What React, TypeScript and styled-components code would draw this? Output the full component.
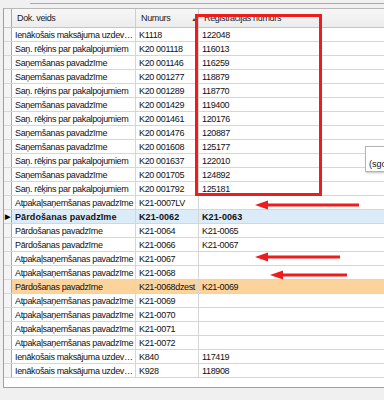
import React from "react";
import styled, { createGlobalStyle, css } from "styled-components";

type Kind = "plain" | "selected" | "marked";

interface DocRow {
    dok: string;
    num: string;
    reg?: string;
    kind?: Kind;
}

const INC = "Ienākošais maksājuma uzdev…";
const SRP = "Saņ. rēķins par pakalpojumiem";
const SP = "Saņemšanas pavadzīme";
const AP = "Atpakaļsaņemšanas pavadzīme";
const PP = "Pārdošanas pavadzīme";

const rows: DocRow[] = [
    { dok: INC, num: "K1118", reg: "122048" },
    { dok: SRP, num: "K20 001118", reg: "116013" },
    { dok: SP, num: "K20 001146", reg: "116259" },
    { dok: SP, num: "K20 001277", reg: "118879" },
    { dok: SRP, num: "K20 001289", reg: "118770" },
    { dok: SP, num: "K20 001429", reg: "119400" },
    { dok: SRP, num: "K20 001461", reg: "120176" },
    { dok: SP, num: "K20 001476", reg: "120887" },
    { dok: SP, num: "K20 001608", reg: "125177" },
    { dok: SRP, num: "K20 001637", reg: "122010" },
    { dok: SP, num: "K20 001705", reg: "124892" },
    { dok: SRP, num: "K20 001792", reg: "125181" },
    { dok: AP, num: "K21-0007LV" },
    { dok: PP, num: "K21-0062", reg: "K21-0063", kind: "selected" },
    { dok: PP, num: "K21-0064", reg: "K21-0065" },
    { dok: PP, num: "K21-0066", reg: "K21-0067" },
    { dok: AP, num: "K21-0067" },
    { dok: AP, num: "K21-0068" },
    { dok: PP, num: "K21-0068dzest", reg: "K21-0069", kind: "marked" },
    { dok: AP, num: "K21-0069" },
    { dok: AP, num: "K21-0070" },
    { dok: AP, num: "K21-0071" },
    { dok: AP, num: "K21-0072" },
    { dok: INC, num: "K840", reg: "117419" },
    { dok: INC, num: "K928", reg: "118908" },
];

const GlobalStyle = createGlobalStyle`
    html, body {
        margin: 0;
        padding: 0;
        background: #f0f0f0;
    }
`;

export default function App() {
    return (
        <>
            <GlobalStyle />
            <Screen>
                <TopStrip>
                    <TabEdge />
                </TopStrip>
                <GridFrame>
                    <HeaderRow>
                        <IndicatorCell />
                        <HeaderCell>Dok. veids</HeaderCell>
                        <HeaderCell>
                            Numurs
                            <SortGlyph>▲</SortGlyph>
                        </HeaderCell>
                        <HeaderCell $last>Registracijas numurs</HeaderCell>
                    </HeaderRow>
                    {rows.map((r, i) => (
                        <DataRow key={i} $kind={r.kind ?? "plain"}>
                            <IndicatorCell>
                                {r.kind === "selected" && <RowPointer>▶</RowPointer>}
                            </IndicatorCell>
                            <Cell>{r.dok}</Cell>
                            <Cell>{r.num}</Cell>
                            <Cell $last>{r.reg ?? ""}</Cell>
                        </DataRow>
                    ))}
                    <Filler />
                </GridFrame>
                <RedFrame />
                <Arrows width="384" height="400" viewBox="0 0 384 400">
                    <Arrow x1={359} x2={255} y={205} />
                    <Arrow x1={340} x2={255} y={257} />
                    <Arrow x1={347} x2={270} y={275} />
                </Arrows>
                <Hint>(sgo</Hint>
            </Screen>
        </>
    );
}

function Arrow({ x1, x2, y }: { x1: number; x2: number; y: number }) {
    return (
        <g fill="#ee1c1c" stroke="#ee1c1c">
            <line x1={x1} y1={y} x2={x2 + 10} y2={y} strokeWidth={3} />
            <polygon points={`${x2},${y} ${x2 + 13},${y - 4.5} ${x2 + 13},${y + 4.5}`} stroke="none" />
        </g>
    );
}

const Screen = styled.div`
    position: relative;
    width: 384px;
    height: 400px;
    overflow: hidden;
    background: #f0f0f0;
    font-family: "Liberation Sans", Arial, sans-serif;
    font-size: 9px;
    letter-spacing: -0.35px;
    color: #111;
`;

const TopStrip = styled.div`
    height: 8px;
    padding-top: 3px;
    box-sizing: border-box;
    padding-left: 30px;
`;

const TabEdge = styled.div`
    height: 1px;
    background: #a8a8a8;
`;

const GridFrame = styled.div`
    margin-left: 3px;
    height: 380px;
    background: #ffffff;
    border-left: 1px solid #a0a0a0;
    border-bottom: 1px solid #a0a0a0;
    box-sizing: border-box;
    display: flex;
    flex-direction: column;
`;

const columns = css`
    display: grid;
    grid-template-columns: 8px 124px 63px 1fr;
`;

const HeaderRow = styled.div`
    ${columns};
    height: 20px;
    background: linear-gradient(#f7f7f7, #ececec);
    border-top: 1px solid #b8b8b8;
    border-bottom: 1px solid #c4c4c4;
    box-sizing: border-box;
`;

const HeaderCell = styled.div<{ $last?: boolean }>`
    position: relative;
    display: flex;
    align-items: center;
    padding-left: 5px;
    color: #222;
    border-right: ${(p) => (p.$last ? "none" : "1px solid #cfcfcf")};
    white-space: nowrap;
    overflow: hidden;
`;

const SortGlyph = styled.span`
    position: absolute;
    right: 2px;
    top: 7px;
    font-size: 5px;
    color: #333;
`;

const DataRow = styled.div<{ $kind: Kind }>`
    ${columns};
    height: 14px;
    box-sizing: border-box;
    border-bottom: 1px solid #d6d6d6;
    background: ${(p) =>
        p.$kind === "selected" ? "#dcebf8" : p.$kind === "marked" ? "#fdd39c" : "#ffffff"};
    font-weight: ${(p) => (p.$kind === "selected" ? 700 : 400)};
    letter-spacing: ${(p) => (p.$kind === "selected" ? "0.1px" : "-0.35px")};
`;

const IndicatorCell = styled.div`
    background: #f4f4f4;
    border-right: 1px solid #a9a9a9;
    display: flex;
    align-items: center;
    justify-content: center;
`;

const RowPointer = styled.span`
    font-size: 7px;
    color: #000;
`;

const Cell = styled.div<{ $last?: boolean }>`
    display: flex;
    align-items: center;
    padding-left: 3px;
    white-space: nowrap;
    overflow: hidden;
    border-right: ${(p) => (p.$last ? "none" : "1px solid #d6d6d6")};
`;

const Filler = styled.div`
    flex: 1;
    background: #ffffff;
`;

const RedFrame = styled.div`
    position: absolute;
    left: 195px;
    top: 14px;
    width: 127px;
    height: 182px;
    border: 3px solid #ee1c1c;
    box-sizing: border-box;
    pointer-events: none;
`;

const Arrows = styled.svg`
    position: absolute;
    left: 0;
    top: 0;
    pointer-events: none;
`;

const Hint = styled.div`
    position: absolute;
    left: 365px;
    top: 146px;
    width: 30px;
    height: 26px;
    box-sizing: border-box;
    padding: 12px 0 0 3px;
    background: #ffffff;
    border: 1px solid #b4b4b4;
    box-shadow: 1px 1px 2px rgba(0, 0, 0, 0.25);
    font-size: 9px;
    letter-spacing: 0;
    white-space: nowrap;
`;
